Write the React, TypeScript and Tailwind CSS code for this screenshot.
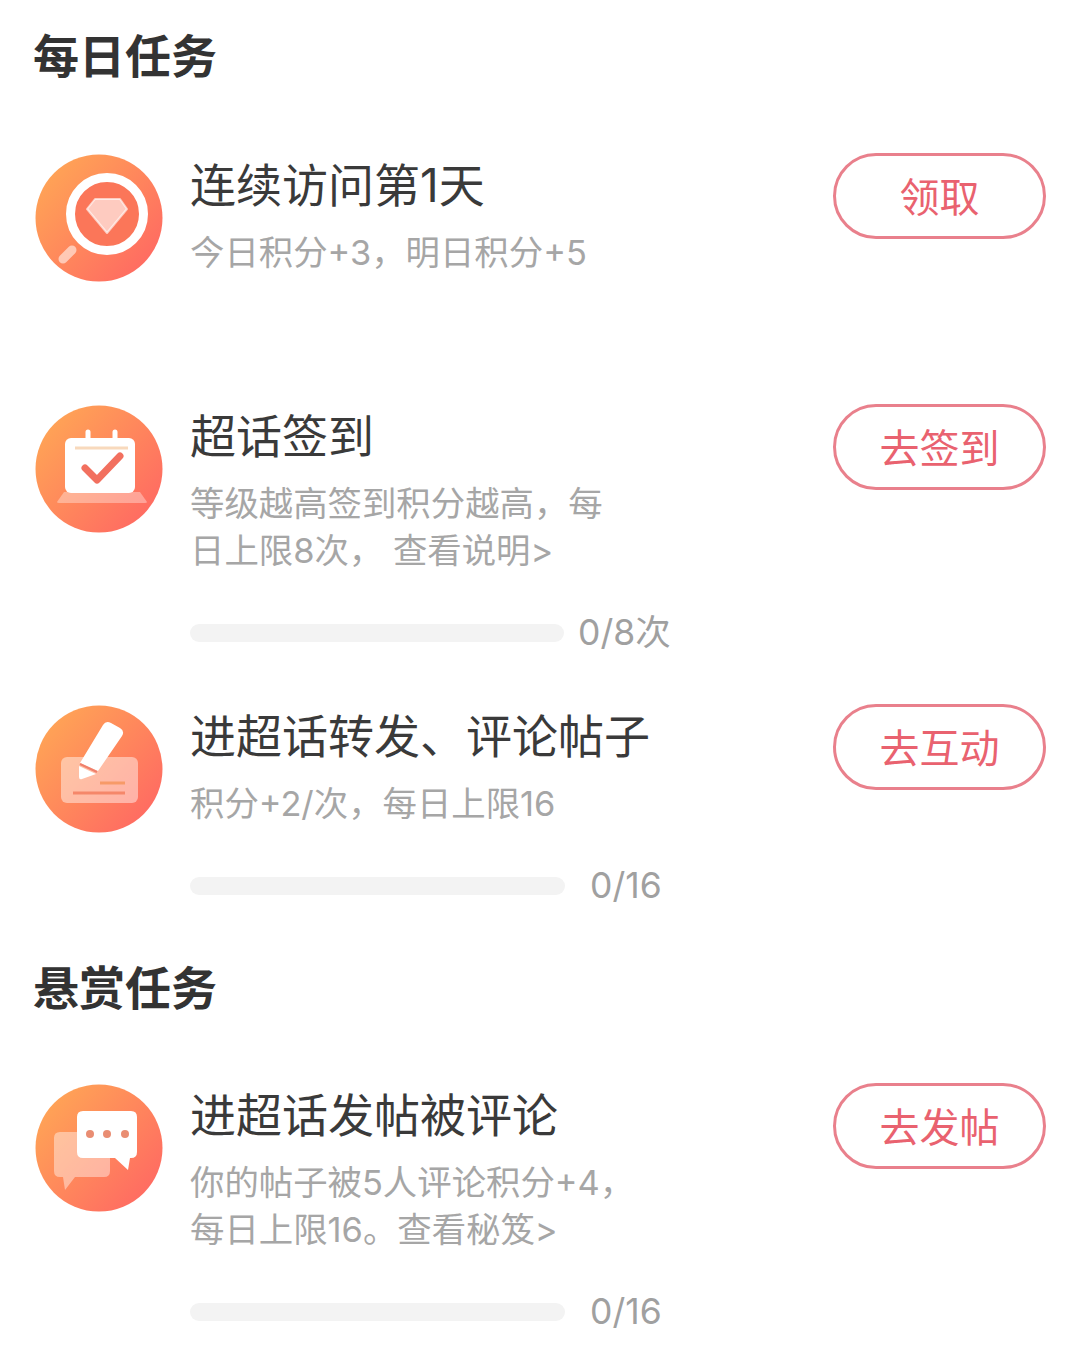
import type { ReactNode } from 'react';

const FONT = '[font-family:Inter,"Noto_Sans_CJK_SC","Noto_Sans",sans-serif]';

function Disc({ id, children }: { id: string; children: ReactNode }) {
  return (
    <svg viewBox="0 0 128 128" className="w-[128px] h-[128px] shrink-0">
      <defs>
        <linearGradient id={id} x1="0.1" y1="0.15" x2="0.9" y2="0.85">
          <stop offset="0" stopColor="#ffa356" />
          <stop offset="1" stopColor="#ff6b62" />
        </linearGradient>
      </defs>
      <circle cx="64" cy="64" r="63.5" fill={`url(#${id})`} />
      {children}
    </svg>
  );
}

function SearchIcon() {
  return (
    <Disc id="disc-search">
      <circle cx="72" cy="60" r="36.5" fill="#fb7659" stroke="#fff" strokeWidth="9" />
      <path d="M60 45H85L92 55L72 79L52 55Z" fill="#fff" fillOpacity="0.62" stroke="#fff" strokeOpacity="0.62" strokeWidth="2" strokeLinejoin="round" />
      <path d="M28 105L37 96" stroke="#fff" strokeOpacity="0.55" strokeWidth="9" strokeLinecap="round" />
    </Disc>
  );
}

function CalendarIcon() {
  return (
    <Disc id="disc-calendar">
      <path d="M29 87H105L112 97Q112 98 110 98H24Q22 98 22 97Z" fill="#fff" fillOpacity="0.35" />
      <rect x="30" y="33" width="70" height="55" rx="6" fill="#fff" />
      <path d="M53 27V35M80 27V35" stroke="#fff" strokeWidth="5" strokeLinecap="round" />
      <path d="M40 43H93" stroke="#f8d9bc" strokeWidth="3" />
      <path d="M50 63L62 75L85 51" fill="none" stroke="#f2705f" strokeWidth="7" strokeLinecap="round" strokeLinejoin="round" />
    </Disc>
  );
}

function PencilIcon() {
  return (
    <Disc id="disc-pencil">
      <rect x="26" y="52" width="77" height="46" rx="6" fill="#fff" fillOpacity="0.45" />
      <path d="M45 58L68 20Q71 15 76 18L85 23Q90 26 87 31L63 66Z" fill="#fff" />
      <path d="M44 61L61 69L47 74Q44 75 44 72Z" fill="#fff" />
      <path d="M45 59L62 67" stroke="#f0806c" strokeWidth="2" />
      <path d="M65 78H90" stroke="#f79a68" strokeWidth="3" />
      <path d="M38 88H90" stroke="#f5876a" strokeWidth="3" />
    </Disc>
  );
}

function ChatIcon() {
  return (
    <Disc id="disc-chat">
      <path d="M25 48H69Q75 48 75 54V87Q75 93 69 93H40L30 106L28 93H25Q19 93 19 87V54Q19 48 25 48Z" fill="#fff" fillOpacity="0.42" />
      <path d="M48 27H96Q102 27 102 33V68Q102 74 96 74H95L93 86L80 74H48Q42 74 42 68V33Q42 27 48 27Z" fill="#fff" />
      <circle cx="55" cy="50" r="4" fill="#e98d72" />
      <circle cx="72" cy="50" r="4" fill="#e98d72" />
      <circle cx="90" cy="50" r="4" fill="#e98d72" />
    </Disc>
  );
}

function SectionTitle({ children, className }: { children: ReactNode; className: string }) {
  return (
    <h2 className={`h-[62px] text-[46px] leading-[62px] font-semibold text-[#333333] ${className}`}>
      {children}
    </h2>
  );
}

function Progress({ label, barClass, labelClass }: { label: string; barClass: string; labelClass: string }) {
  return (
    <div className="flex items-center h-[47px] mt-[35px]">
      <div className={`h-[18px] rounded-full bg-[#f3f3f3] ${barClass}`} />
      <span className={`text-[35.5px] leading-[47px] text-[#a0a0a0] whitespace-nowrap ${labelClass}`}>
        {label}
      </span>
    </div>
  );
}

function TaskRow({
  icon,
  title,
  lines,
  action,
  className,
  children,
}: {
  icon: ReactNode;
  title: string;
  lines: string[];
  action: string;
  className: string;
  children?: ReactNode;
}) {
  return (
    <div className={`flex items-start ${className}`}>
      {icon}
      <div className="flex-1 min-w-0 ml-[27px]">
        <p className="text-[46px] leading-[62px] text-[#3a3a3a] whitespace-nowrap">{title}</p>
        <div className="mt-[13px]">
          {lines.map((line) => (
            <p key={line} className="text-[34.4px] leading-[47px] text-[#a6a6a6] whitespace-pre">
              {line}
            </p>
          ))}
        </div>
        {children}
      </div>
      <button className="w-[213px] h-[86px] -mt-px pt-[3px] rounded-full border-[3px] border-[#e9808c] bg-white text-[40px] text-[#e9626f] flex items-center justify-center shrink-0">
        {action}
      </button>
    </div>
  );
}

export default function App() {
  return (
    <div className={`w-[1080px] h-[1363px] overflow-hidden bg-white pt-[25px] pl-[35px] pr-[34px] ${FONT}`}>
      <SectionTitle className="-ml-[2px]">每日任务</SectionTitle>

      <TaskRow
        className="mt-[67px]"
        icon={<SearchIcon />}
        title="连续访问第1天"
        lines={['今日积分+3，明日积分+5']}
        action="领取"
      />

      <TaskRow
        className="mt-[123px]"
        icon={<CalendarIcon />}
        title="超话签到"
        lines={['等级越高签到积分越高，每', '日上限8次， 查看说明>']}
        action="去签到"
      >
        <Progress label="0/8次" barClass="w-[374px]" labelClass="ml-[14px]" />
      </TaskRow>

      <TaskRow
        className="mt-[49px]"
        icon={<PencilIcon />}
        title="进超话转发、评论帖子"
        lines={['积分+2/次，每日上限16']}
        action="去互动"
      >
        <Progress label="0/16" barClass="w-[375px]" labelClass="ml-[25px]" />
      </TaskRow>

      <SectionTitle className="mt-[48px] -ml-[2px]">悬赏任务</SectionTitle>

      <TaskRow
        className="mt-[65px]"
        icon={<ChatIcon />}
        title="进超话发帖被评论"
        lines={['你的帖子被5人评论积分+4，', '每日上限16。查看秘笈>']}
        action="去发帖"
      >
        <Progress label="0/16" barClass="w-[375px]" labelClass="ml-[25px]" />
      </TaskRow>
    </div>
  );
}
